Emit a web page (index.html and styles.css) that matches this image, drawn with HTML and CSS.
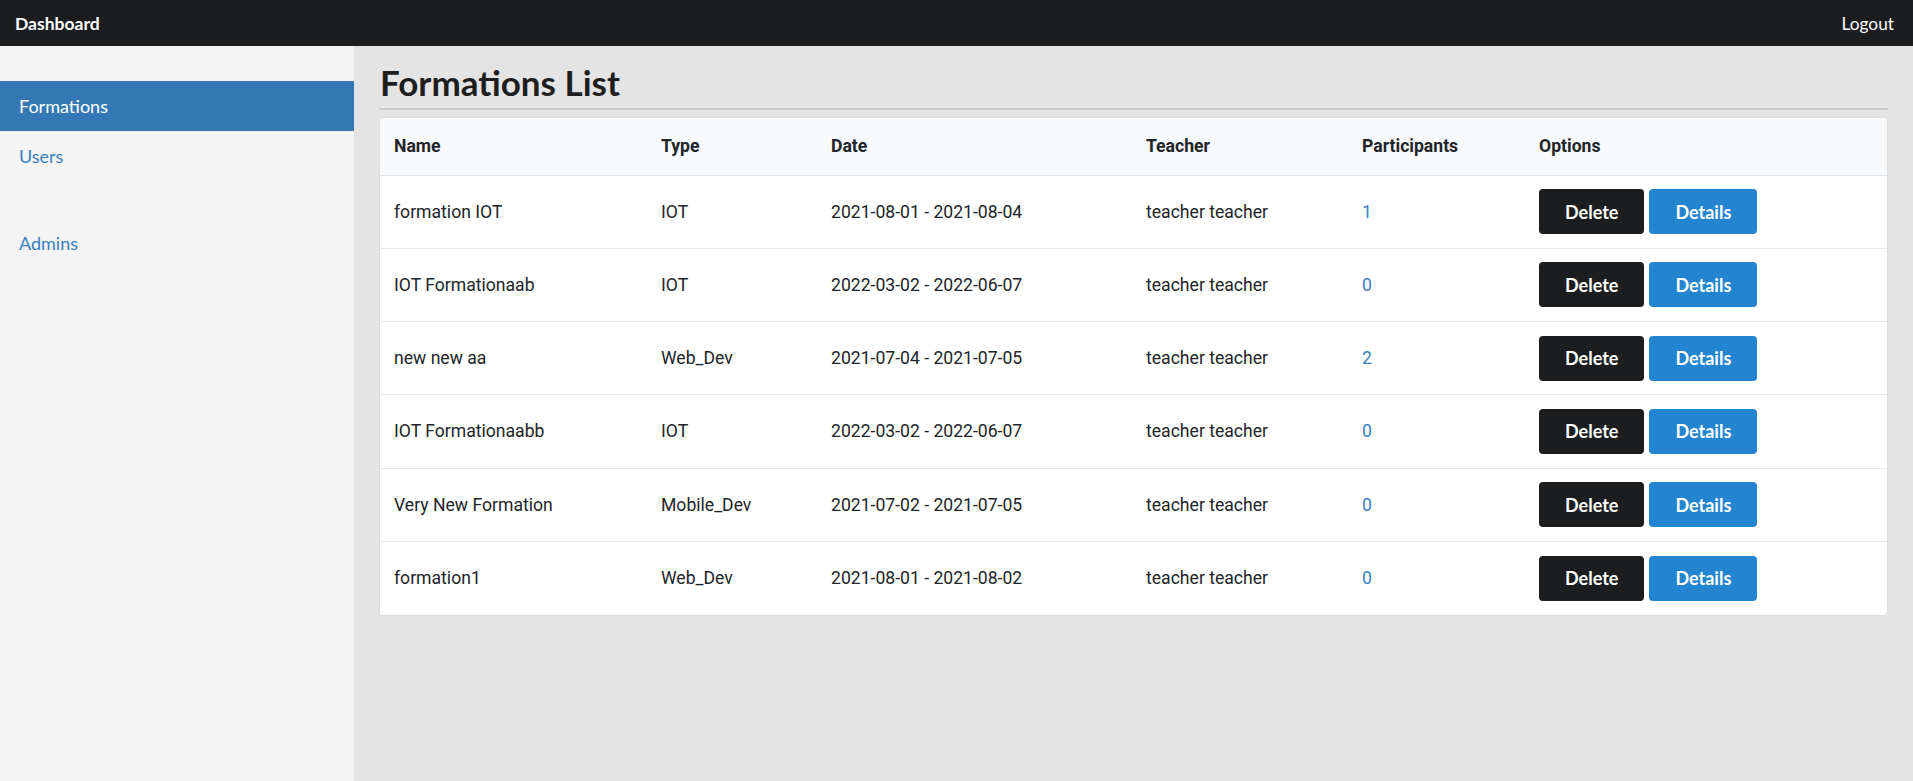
FILE: index.html
```html
<!DOCTYPE html>
<html lang="en">
<head>
<meta charset="utf-8">
<title>Dashboard</title>
<link rel="stylesheet" href="styles.css">
</head>
<body>
<header class="navbar">
  <a class="brand" href="#">Dashboard</a>
  <a class="logout" href="#">Logout</a>
</header>
<div class="layout">
  <aside class="sidebar">
    <a class="side-link active" href="#">Formations</a>
    <a class="side-link" href="#">Users</a>
    <div class="side-spacer"></div>
    <a class="side-link" href="#">Admins</a>
  </aside>
  <main class="main">
    <h1 class="title">Formations List</h1>
    <hr class="rule">
    <div class="card">
      <table class="table">
        <colgroup>
          <col class="c-name"><col class="c-type"><col class="c-date"><col class="c-teacher"><col class="c-part"><col class="c-opt">
        </colgroup>
        <thead>
          <tr><th>Name</th><th>Type</th><th>Date</th><th>Teacher</th><th>Participants</th><th>Options</th></tr>
        </thead>
        <tbody>
          <tr><td>formation IOT</td><td>IOT</td><td>2021-08-01 - 2021-08-04</td><td>teacher teacher</td><td><a class="num" href="#">1</a></td><td><div class="opts"><button class="btn btn-dark">Delete</button><button class="btn btn-blue">Details</button></div></td></tr>
          <tr><td>IOT Formationaab</td><td>IOT</td><td>2022-03-02 - 2022-06-07</td><td>teacher teacher</td><td><a class="num" href="#">0</a></td><td><div class="opts"><button class="btn btn-dark">Delete</button><button class="btn btn-blue">Details</button></div></td></tr>
          <tr><td>new new aa</td><td>Web_Dev</td><td>2021-07-04 - 2021-07-05</td><td>teacher teacher</td><td><a class="num" href="#">2</a></td><td><div class="opts"><button class="btn btn-dark">Delete</button><button class="btn btn-blue">Details</button></div></td></tr>
          <tr><td>IOT Formationaabb</td><td>IOT</td><td>2022-03-02 - 2022-06-07</td><td>teacher teacher</td><td><a class="num" href="#">0</a></td><td><div class="opts"><button class="btn btn-dark">Delete</button><button class="btn btn-blue">Details</button></div></td></tr>
          <tr><td>Very New Formation</td><td>Mobile_Dev</td><td>2021-07-02 - 2021-07-05</td><td>teacher teacher</td><td><a class="num" href="#">0</a></td><td><div class="opts"><button class="btn btn-dark">Delete</button><button class="btn btn-blue">Details</button></div></td></tr>
          <tr><td>formation1</td><td>Web_Dev</td><td>2021-08-01 - 2021-08-02</td><td>teacher teacher</td><td><a class="num" href="#">0</a></td><td><div class="opts"><button class="btn btn-dark">Delete</button><button class="btn btn-blue">Details</button></div></td></tr>
        </tbody>
      </table>
    </div>
  </main>
</div>
</body>
</html>
```
FILE: styles.css
```css
* { box-sizing: border-box; }
html, body { margin: 0; padding: 0; height: 100%; }
body {
  font-family: Lato, "Noto Sans", sans-serif;
  background: #e4e4e4;
  color: #212529;
}
a { text-decoration: none; }

.navbar {
  height: 46px;
  background: #1b1c1e;
  display: flex;
  align-items: center;
  justify-content: space-between;
  padding: 0 19px 0 15px;
}
.brand { color: #ffffff; font-weight: 700; font-size: 17.5px; }
.logout { color: #ffffff; font-size: 17.3px; }

.layout {
  display: flex;
  height: calc(100% - 46px);
}
.sidebar {
  width: 354px;
  flex: none;
  background: #f4f4f4;
  padding-top: 35px;
  display: flex;
  flex-direction: column;
}
.side-link {
  height: 50px;
  display: flex;
  align-items: center;
  padding-left: 19px;
  font-size: 18px;
  color: #3a7fc2;
}
.side-link.active { background: #3479b6; color: #ffffff; }
.side-spacer { height: 37px; }

.main {
  flex: 1;
  padding: 15px 25px 0 25px;
}
.title {
  margin: 0;
  font-size: 35px;
  font-weight: 700;
  line-height: 1.2;
  color: #1e1e1e;
  padding-left: 1px;
}
.rule {
  margin: 5px 0 7px 0;
  border: 0;
  border-top: 2px solid #cbcbcb;
}
.card {
  background: #ffffff;
  border-radius: 4px;
  border: 1px solid #dddddd;
  overflow: hidden;
}
.table {
  width: 100%;
  border-collapse: collapse;
  table-layout: fixed;
  font-family: Roboto, "Noto Sans", sans-serif;
  font-size: 17.6px;
  color: #212529;
}
.c-name { width: 267px; }
.c-type { width: 170px; }
.c-date { width: 315px; }
.c-teacher { width: 216px; }
.c-part { width: 177px; }
.c-opt { width: auto; }
.table th {
  text-align: left;
  font-weight: 700;
  background: #f8f9fa;
  height: 57px;
  padding: 0 14px;
  border-bottom: 1px solid #dee2e6;
}
.table td {
  height: 73.25px;
  padding: 0 14px;
  border-bottom: 1px solid #e4e6e8;
  vertical-align: middle;
}
.table tbody tr:last-child td { border-bottom: 0; }
.num { color: #3a7fc2; }
.opts { display: flex; gap: 5px; }
.btn {
  font-family: Lato, "Noto Sans", sans-serif;
  font-weight: 700;
  font-size: 18px;
  color: #ffffff;
  border: 0;
  border-radius: 4px;
  height: 45px;
  padding: 0 26px;
  cursor: pointer;
}
.btn-dark { background: #1c1d1f; }
.btn-blue { background: #2385d0; }
```
